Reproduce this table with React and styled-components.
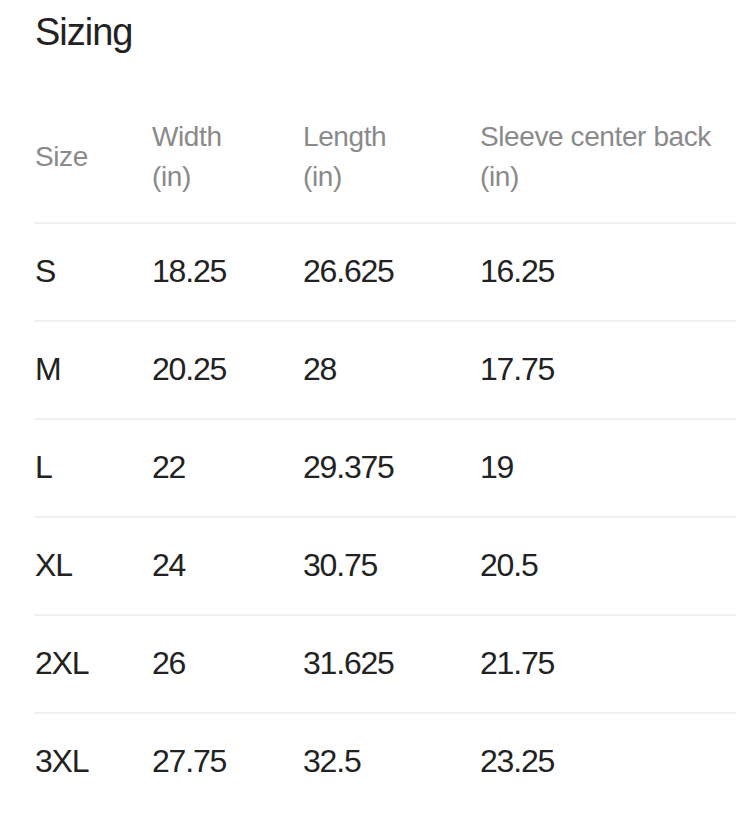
import React from "react";
import styled, { createGlobalStyle } from "styled-components";

const GlobalStyle = createGlobalStyle`
  body {
    margin: 0;
    background: #ffffff;
    font-family: "Liberation Sans", Arial, sans-serif;
    overflow: hidden;
  }
`;

const Page = styled("div")`
  padding: 9px 0 0 35px;
`;

const Title = styled("h2")`
  margin: 0 0 38px;
  font-size: 38px;
  line-height: 46px;
  font-weight: 400;
  letter-spacing: -1px;
  color: #222222;
`;

const Row = styled("div")`
  display: grid;
  grid-template-columns: 117px 151px 177px 1fr;
  align-items: center;
  min-height: ${props => (props.head ? "80px" : "93px")};
  padding: ${props => (props.head ? "24px 0 25px" : "0 0 3px")};
  border-bottom: ${props => (props.last ? "0" : "2px solid #f0f0f0")};
`;

const HeadCell = styled("div")`
  font-size: 28px;
  line-height: 40px;
  letter-spacing: -0.4px;
  color: #8a8a8a;
  white-space: nowrap;
`;

const Cell = styled("div")`
  font-size: 32px;
  line-height: 40px;
  letter-spacing: -1.2px;
  color: #222222;
  white-space: nowrap;
`;

const sizes = [
  ["S", "18.25", "26.625", "16.25"],
  ["M", "20.25", "28", "17.75"],
  ["L", "22", "29.375", "19"],
  ["XL", "24", "30.75", "20.5"],
  ["2XL", "26", "31.625", "21.75"],
  ["3XL", "27.75", "32.5", "23.25"]
];

const App = () => (
  <React.Fragment>
    <GlobalStyle />
    <Page>
      <Title>Sizing</Title>
      <Row head>
        <HeadCell>Size</HeadCell>
        <HeadCell>
          Width
          <br />
          (in)
        </HeadCell>
        <HeadCell>
          Length
          <br />
          (in)
        </HeadCell>
        <HeadCell>
          Sleeve center back
          <br />
          (in)
        </HeadCell>
      </Row>
      {sizes.map((row, i) => (
        <Row key={row[0]} last={i === sizes.length - 1}>
          {row.map((value, j) => (
            <Cell key={j}>{value}</Cell>
          ))}
        </Row>
      ))}
    </Page>
  </React.Fragment>
);

export default App;
